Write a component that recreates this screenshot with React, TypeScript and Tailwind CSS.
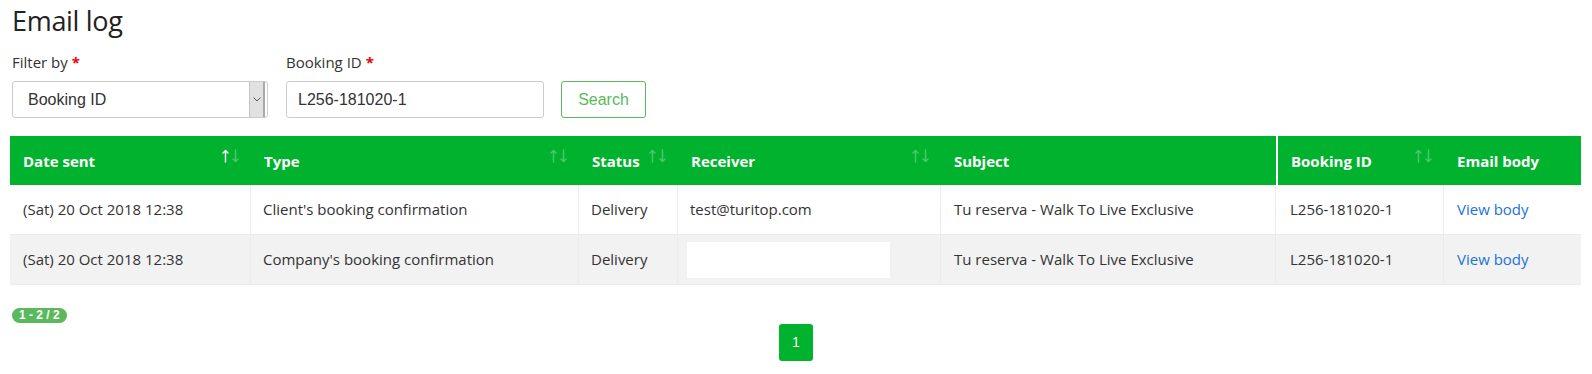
import React from 'react';

const font = { fontFamily: '"Open Sans", "Noto Sans", sans-serif' };
const arial = { fontFamily: '"Liberation Sans", Arial, sans-serif' };

interface Column {
  key: string;
  label: string;
  width: string;
  sort?: 'up' | 'none';
}

const columns: Column[] = [
  { key: 'date', label: 'Date sent', width: 'w-[241px]', sort: 'up' },
  { key: 'type', label: 'Type', width: 'w-[328px]', sort: 'none' },
  { key: 'status', label: 'Status', width: 'w-[99px]', sort: 'none' },
  { key: 'receiver', label: 'Receiver', width: 'w-[263px]', sort: 'none' },
  { key: 'subject', label: 'Subject', width: 'w-[335px]' },
  { key: 'booking', label: 'Booking ID', width: 'w-[168px]', sort: 'none' },
  { key: 'body', label: 'Email body', width: 'w-[137px]' },
];

const rows = [
  {
    date: '(Sat) 20 Oct 2018 12:38',
    type: "Client's booking confirmation",
    status: 'Delivery',
    receiver: 'test@turitop.com',
    subject: 'Tu reserva - Walk To Live Exclusive',
    booking: 'L256-181020-1',
  },
  {
    date: '(Sat) 20 Oct 2018 12:38',
    type: "Company's booking confirmation",
    status: 'Delivery',
    receiver: '',
    subject: 'Tu reserva - Walk To Live Exclusive',
    booking: 'L256-181020-1',
  },
];

// little up/down arrows on sortable headers
const SortIcon = ({ active }: { active: boolean }) => (
  <svg className="absolute right-[12px] top-[13px]" width="17" height="14" viewBox="0 0 17 14">
    <g fill="none" strokeWidth="1.4" strokeLinecap="round" strokeLinejoin="round">
      <path d="M3.5 13 V1.5 M1 4 L3.5 1.5 L6 4" stroke={active ? '#ffffff' : 'rgba(255,255,255,0.3)'} />
      <path d="M13.5 1 V12.5 M11 10 L13.5 12.5 L16 10" stroke="rgba(255,255,255,0.3)" />
    </g>
  </svg>
);

export default function App() {
  return (
    <div className="bg-white w-[1592px] h-[374px] text-[#333]" style={font}>
      <div className="pl-[12px] pt-[3px]">
        <h1 className="text-[27px] leading-[36px] text-[#222] font-normal tracking-[-0.3px]">Email log</h1>

        {/* Filters */}
        <div className="flex items-end mt-[13px]">
          <div className="w-[256px]">
            <label className="block text-[15px] leading-[21px] mb-[8px]">
              Filter by <span className="text-[#e00] font-bold">*</span>
            </label>
            <div
              className="relative h-[37px] border border-[#ccc] rounded-[3px] flex items-center pl-[15px] text-[16px] text-[#333]"
              style={arial}
            >
              Booking ID
              <span className="absolute right-[2px] top-[0px] bottom-[0px] w-[16px] bg-[#e1e1e1] border-l border-[#c4c4c4] border-r-2 border-r-[#a8a8a8] flex items-center justify-center">
                <svg width="8" height="5" viewBox="0 0 8 5">
                  <path d="M0.5 0.5 L4 4 L7.5 0.5" fill="none" stroke="#555" strokeWidth="1" />
                </svg>
              </span>
            </div>
          </div>
          <div className="w-[258px] ml-[18px]">
            <label className="block text-[15px] leading-[21px] mb-[8px]">
              Booking ID <span className="text-[#e00] font-bold">*</span>
            </label>
            <div
              className="h-[37px] border border-[#ccc] rounded-[3px] flex items-center pl-[11px] text-[16px] text-[#333]"
              style={arial}
            >
              L256-181020-1
            </div>
          </div>
          <button
            className="ml-[17px] h-[37px] w-[85px] border border-[#5cb85c] rounded-[3px] text-[#5cb85c] text-[16px]"
            style={arial}
          >
            Search
          </button>
        </div>
      </div>

      {/* Table */}
      <div className="ml-[10px] mt-[18px] w-[1571px]">
        <div className="flex bg-[#00b22d] h-[49px]">
          {columns.map((c) => (
            <div
              key={c.key}
              className={`${c.width} relative flex items-center pl-[13px] pt-[1px] text-white font-bold text-[15px] ${
                c.key === 'booking' ? 'border-l-2 border-white' : ''
              }`}
            >
              {c.label}
              {c.sort && <SortIcon active={c.sort === 'up'} />}
            </div>
          ))}
        </div>
        {rows.map((r, i) => (
          <div
            key={i}
            className={`flex h-[50px] text-[15px] text-[#333] border-b border-[#ececec] ${i === 1 ? 'bg-[#f2f2f2]' : 'bg-white'}`}
          >
            <div className="w-[241px] flex items-center pl-[13px] border-r border-[#ececec]">{r.date}</div>
            <div className="w-[328px] flex items-center pl-[12px] border-r border-[#ececec]">{r.type}</div>
            <div className="w-[99px] flex items-center pl-[12px] border-r border-[#ececec]">{r.status}</div>
            <div className="w-[263px] flex items-center pl-[9px] border-r border-[#ececec]">
              {r.receiver ? (
                <span className="pl-[3px]">{r.receiver}</span>
              ) : (
                <span className="block w-[203px] h-[36px] bg-white" />
              )}
            </div>
            <div className="w-[335px] flex items-center pl-[13px] border-r border-[#ececec]">{r.subject}</div>
            <div className="w-[168px] flex items-center pl-[14px] border-r border-[#ececec]">{r.booking}</div>
            <div className="w-[137px] flex items-center pl-[13px]">
              <a className="text-[#1a73d9]">View body</a>
            </div>
          </div>
        ))}
      </div>

      {/* Footer */}
      <div className="pl-[12px] mt-[23px] flex">
        <span
          className="inline-block bg-[#5cb85c] text-white text-[12px] font-bold leading-[15px] px-[7px] rounded-full"
          style={arial}
        >
          1 - 2 / 2
        </span>
      </div>
      <div className="flex justify-center mt-[1px]">
        <span
          className="w-[34px] h-[37px] bg-[#00b22d] rounded-[3px] text-white text-[14px] flex items-center justify-center"
          style={arial}
        >
          1
        </span>
      </div>
    </div>
  );
}
